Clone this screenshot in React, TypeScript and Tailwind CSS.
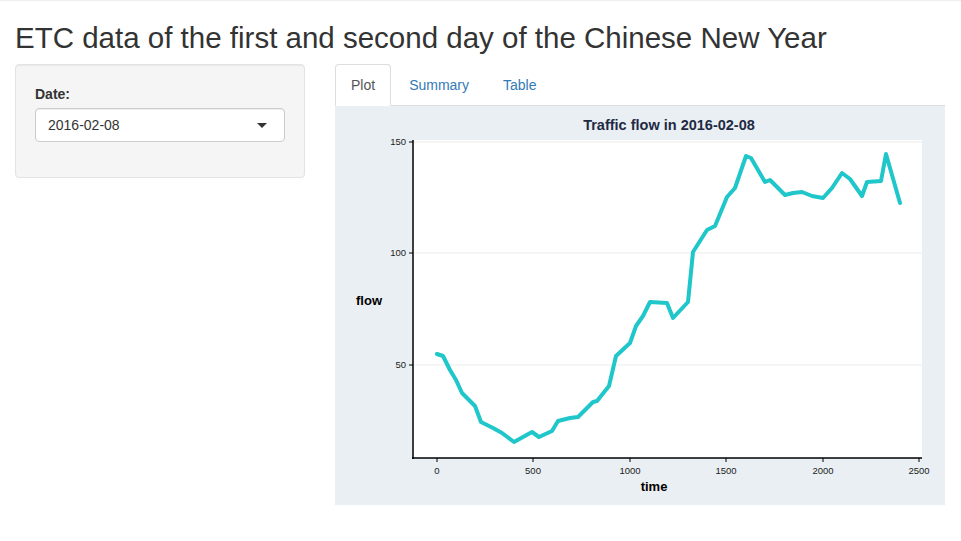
import React from "react";

// pixel points of the flow line, taken in page coordinates
const flowPoints: Array<[number, number]> = [
  [437, 354], [443, 356], [450, 370], [456, 380], [462, 393], [475, 406],
  [481, 422], [493, 428], [502, 433], [514, 442], [523, 437], [532, 432],
  [539, 437], [552, 431], [558, 421], [570, 418], [578, 417], [593, 402],
  [597, 401], [609, 386], [616, 356], [630, 343], [636, 326], [643, 316],
  [650, 302], [667, 303], [673, 318], [688, 302], [693, 252], [707, 230],
  [715, 226], [727, 197], [735, 188], [746, 156], [751, 158], [765, 182],
  [770, 180], [785, 195], [793, 193], [802, 192], [812, 196], [823, 198],
  [832, 188], [842, 173], [850, 179], [862, 196], [867, 182], [881, 181],
  [886, 154], [900, 203],
];

const yTicks = [
  { label: "150", y: 36 },
  { label: "100", y: 147 },
  { label: "50", y: 259 },
];

const xTicks = [
  { label: "0", x: 102 },
  { label: "500", x: 198 },
  { label: "1000", x: 295 },
  { label: "1500", x: 391 },
  { label: "2000", x: 488 },
  { label: "2500", x: 584 },
];

function FlowPlot() {
  const pts = flowPoints.map(([x, y]) => `${x - 335},${y - 106}`).join(" ");
  return (
    <svg width="610" height="399" viewBox="0 0 610 399" className="block">
      <rect x="0" y="0" width="610" height="399" fill="#e9eff2" />
      <text
        x="334"
        y="24"
        textAnchor="middle"
        fontFamily="'Liberation Sans', Arial, sans-serif"
        fontWeight="bold"
        fontSize="14.5"
        fill="#1f2a44"
      >
        Traffic flow in 2016-02-08
      </text>
      <rect x="78" y="34" width="509" height="318" fill="#ffffff" />
      {yTicks.map((t) => (
        <g key={t.label}>
          <line x1="78" x2="587" y1={t.y} y2={t.y} stroke="#ebebeb" strokeWidth="1" />
          <line x1="74" x2="78" y1={t.y} y2={t.y} stroke="#000" strokeWidth="1" />
          <text
            x="71"
            y={t.y + 3}
            textAnchor="end"
            fontFamily="'Liberation Sans', Arial, sans-serif"
            fontSize="9.5"
            fill="#222"
          >
            {t.label}
          </text>
        </g>
      ))}
      {xTicks.map((t) => (
        <g key={t.label}>
          <line x1={t.x} x2={t.x} y1="352" y2="356" stroke="#000" strokeWidth="1" />
          <text
            x={t.x}
            y="368"
            textAnchor="middle"
            fontFamily="'Liberation Sans', Arial, sans-serif"
            fontSize="9.5"
            fill="#222"
          >
            {t.label}
          </text>
        </g>
      ))}
      <line x1="78" x2="78" y1="34" y2="353" stroke="#000" strokeWidth="1.5" />
      <line x1="77" x2="587" y1="352" y2="352" stroke="#000" strokeWidth="1.5" />
      <polyline
        points={pts}
        fill="none"
        stroke="#1fc6ca"
        strokeWidth="4"
        strokeLinejoin="round"
        strokeLinecap="round"
      />
      <text
        x="319"
        y="385"
        textAnchor="middle"
        fontFamily="'Liberation Sans', Arial, sans-serif"
        fontWeight="bold"
        fontSize="13"
        fill="#000"
      >
        time
      </text>
      <text
        x="34"
        y="199"
        textAnchor="middle"
        fontFamily="'Liberation Sans', Arial, sans-serif"
        fontWeight="bold"
        fontSize="13"
        fill="#000"
      >
        flow
      </text>
    </svg>
  );
}

export default function App() {
  return (
    <div className="min-h-[541px] w-full bg-white border-t border-[#eeeeee] font-['Liberation_Sans',Arial,sans-serif] text-[14px] leading-[20px] text-[#333]">
      <div className="px-[15px]">
        <h2 className="mt-[20px] mb-[10px] text-[29.5px] leading-[33px] font-normal text-[#333]">
          ETC data of the first and second day of the Chinese New Year
        </h2>
        <div className="flex">
          {/* sidebar */}
          <div className="w-[290px] shrink-0">
            <div className="bg-[#f5f5f5] border border-[#e3e3e3] rounded-[4px] p-[19px] pb-[20px] shadow-[inset_0_1px_1px_rgba(0,0,0,0.05)]">
              <div className="mb-[15px]">
                <label className="block mb-[4px] font-bold">Date:</label>
                <div className="relative h-[34px] bg-white border border-[#cccccc] rounded-[4px] px-[12px] flex items-center shadow-[inset_0_1px_1px_rgba(0,0,0,0.075)]">
                  <span>2016-02-08</span>
                  <span className="absolute right-[17px] top-[14px] w-0 h-0 border-x-[5px] border-x-transparent border-t-[5px] border-t-[#333]" />
                </div>
              </div>
            </div>
          </div>
          {/* main panel */}
          <div className="ml-[30px] w-[610px]">
            <ul className="flex border-b border-[#dddddd]">
              <li className="-mb-px mr-[2px]">
                <span className="block px-[15px] py-[10px] bg-white border border-[#dddddd] border-b-transparent rounded-t-[4px] text-[#555]">
                  Plot
                </span>
              </li>
              <li className="-mb-px mr-[2px]">
                <span className="block px-[15px] py-[10px] border border-transparent text-[#337ab7]">
                  Summary
                </span>
              </li>
              <li className="-mb-px mr-[2px]">
                <span className="block px-[15px] py-[10px] border border-transparent text-[#337ab7]">
                  Table
                </span>
              </li>
            </ul>
            <FlowPlot />
          </div>
        </div>
      </div>
    </div>
  );
}
